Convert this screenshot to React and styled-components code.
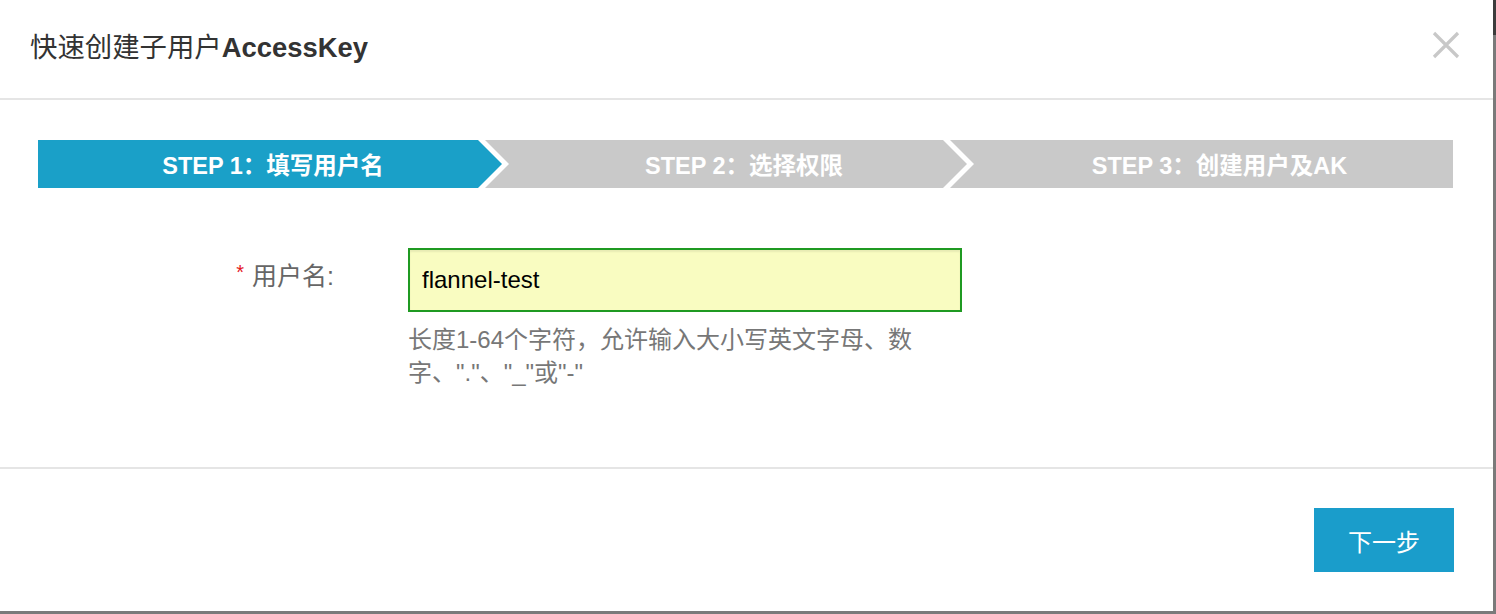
import React from 'react';
import styled, {createGlobalStyle} from 'styled-components';

const GlobalStyle = createGlobalStyle`
    html, body {
        margin: 0;
        padding: 0;
    }
    body {
        width: 1496px;
        height: 614px;
        overflow: hidden;
        background: linear-gradient(to bottom, #3c3c3c 0, #3c3c3c 35px, #7a7a7a 35px, #7a7a7a 100%);
        font-family: "Liberation Sans", "Noto Sans CJK SC", sans-serif;
    }
`;

const Dialog = styled.div`
    width: 1493px;
    height: 611px;
    background: #fff;
    display: flex;
    flex-direction: column;
    box-sizing: border-box;
`;

const Header = styled.div`
    height: 100px;
    box-sizing: border-box;
    padding: 0 33px 0 30px;
    border-bottom: 2px solid #e5e5e5;
    display: flex;
    align-items: center;
    justify-content: space-between;
`;

const Title = styled.h3`
    margin: 0;
    font-size: 27.4px;
    font-weight: normal;
    color: #333;
    line-height: 1;
    margin-top: -2px;

    b {
        font-weight: bold;
    }
`;

const CloseButton = styled.button`
    border: none;
    background: none;
    padding: 0;
    width: 28px;
    height: 28px;
    margin-top: -8px;
    cursor: pointer;
    display: flex;
`;

const Body = styled.div`
    flex: 1;
    padding: 40px 40px 0 38px;
`;

const Steps = styled.div`
    display: flex;
    height: 48px;
`;

const Step = styled.div`
    box-sizing: border-box;
    flex: ${p => p.$last ? '1' : `0 0 ${p.$width}px`};
    margin-left: ${p => p.$first ? '0' : '-17px'};
    padding-left: ${p => p.$first ? '6px' : '36px'};
    background: ${p => p.$active ? '#1aa0c8' : '#c9c9c9'};
    color: #fff;
    font-size: 23.5px;
    font-weight: bold;
    display: flex;
    align-items: center;
    justify-content: center;
    clip-path: ${p => {
        const left = p.$first ? '0 50%' : '24px 50%';
        const right = p.$last
            ? '100% 0, 100% 100%'
            : 'calc(100% - 24px) 0, 100% 50%, calc(100% - 24px) 100%';
        return `polygon(0 0, ${right}, 0 100%, ${left})`;
    }};
`;

const FormRow = styled.div`
    display: grid;
    grid-template-columns: 296px 554px;
    column-gap: 74px;
    margin-top: 60px;
`;

const Label = styled.label`
    height: 64px;
    display: flex;
    align-items: center;
    justify-content: flex-end;
    font-size: 25px;
    color: #666;
    margin-top: -6px;
`;

const Required = styled.span`
    color: #e4181e;
    font-size: 20px;
    margin-right: 8px;
    margin-top: -4px;
`;

const Field = styled.div`
    display: flex;
    flex-direction: column;
`;

const Input = styled.input`
    height: 64px;
    box-sizing: border-box;
    border: 2px solid #1f9a22;
    background: #f9fcc1;
    box-shadow: inset 0 2px 2px rgba(0, 0, 0, 0.07);
    padding: 0 12px;
    font-family: "Liberation Sans", "Noto Sans CJK SC", sans-serif;
    font-size: 24px;
    color: #000;
    outline: none;
`;

const Help = styled.div`
    margin-top: 11px;
    width: 530px;
    font-size: 24px;
    line-height: 33px;
    color: #777;
`;

const Footer = styled.div`
    border-top: 2px solid #e5e5e5;
    padding: 39px 39px 39px 0;
    display: flex;
    justify-content: flex-end;
`;

const PrimaryButton = styled.button`
    width: 140px;
    height: 64px;
    border: none;
    background: #1a9dcb;
    color: #fff;
    font-family: "Liberation Sans", "Noto Sans CJK SC", sans-serif;
    font-size: 24px;
    cursor: pointer;
`;

const steps = [
    {label: 'STEP 1：填写用户名', width: 464},
    {label: 'STEP 2：选择权限', width: 482},
    {label: 'STEP 3：创建用户及AK'},
];

export default function App() {
    const [name, setName] = React.useState('flannel-test');

    return (
        <>
            <GlobalStyle/>
            <Dialog>
                <Header>
                    <Title>快速创建子用户<b>AccessKey</b></Title>
                    <CloseButton aria-label="关闭">
                        <svg width="28" height="28" viewBox="0 0 28 28">
                            <path d="M2 2 L26 26 M26 2 L2 26" stroke="#c8c8c8" strokeWidth="3.2" fill="none"/>
                        </svg>
                    </CloseButton>
                </Header>

                <Body>
                    <Steps>
                        {steps.map((s, i) => (
                            <Step key={i}
                                  $first={i === 0}
                                  $last={i === steps.length - 1}
                                  $active={i === 0}
                                  $width={s.width}>
                                {s.label}
                            </Step>
                        ))}
                    </Steps>

                    <FormRow>
                        <Label><Required>*</Required>用户名:</Label>
                        <Field>
                            <Input value={name} onChange={e => setName(e.target.value)}/>
                            <Help>长度1-64个字符，允许输入大小写英文字母、数字、"."、"_"或"-"</Help>
                        </Field>
                    </FormRow>
                </Body>

                <Footer>
                    <PrimaryButton>下一步</PrimaryButton>
                </Footer>
            </Dialog>
        </>
    );
}
